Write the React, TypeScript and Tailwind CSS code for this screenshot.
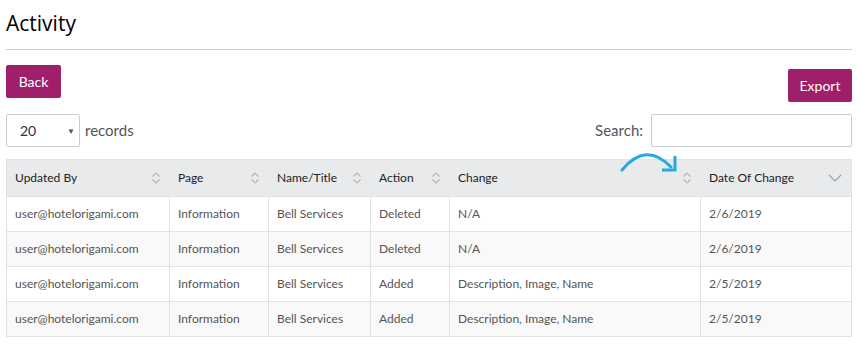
const rows = [
  { by: "user@hotelorigami.com", page: "Information", name: "Bell Services", action: "Deleted", change: "N/A", date: "2/6/2019" },
  { by: "user@hotelorigami.com", page: "Information", name: "Bell Services", action: "Deleted", change: "N/A", date: "2/6/2019" },
  { by: "user@hotelorigami.com", page: "Information", name: "Bell Services", action: "Added", change: "Description, Image, Name", date: "2/5/2019" },
  { by: "user@hotelorigami.com", page: "Information", name: "Bell Services", action: "Added", change: "Description, Image, Name", date: "2/5/2019" },
];

const cols = [
  { label: "Updated By", w: "w-[163px]" },
  { label: "Page", w: "w-[99px]" },
  { label: "Name/Title", w: "w-[102px]" },
  { label: "Action", w: "w-[79px]" },
  { label: "Change", w: "w-[251px]" },
  { label: "Date Of Change", w: "" },
];

function SortIcon() {
  return (
    <svg width="10" height="14" viewBox="0 0 10 14" fill="none" stroke="#b5b5b5" strokeWidth="1.1">
      <path d="M1.5 5.5 L5 2 L8.5 5.5" />
      <path d="M1.5 8.5 L5 12 L8.5 8.5" />
    </svg>
  );
}

function DownIcon() {
  return (
    <svg width="14" height="8" viewBox="0 0 14 8" fill="none" stroke="#8fa3b8" strokeWidth="1.2">
      <path d="M1 1 L7 7 L13 1" />
    </svg>
  );
}

export default function App() {
  return (
    <div className="w-[862px] h-[344px] bg-white px-[6px] pt-[9px] font-['Lato',sans-serif] text-[#333]">
      <h1 className="text-[21px] leading-[28px] font-['Open_Sans',sans-serif] text-black">Activity</h1>
      <div className="mt-[12px] h-px w-[846px] bg-[#cccccc]" />
      <div className="mt-[15px] flex items-start justify-between w-[846px]">
        <button className="h-[33px] w-[55px] rounded-[2px] bg-[#a01f6a] text-[14px] text-white">Back</button>
        <button className="mt-[4px] h-[33px] w-[64px] rounded-[2px] bg-[#a01f6a] text-[14px] text-white">Export</button>
      </div>
      <div className="mt-[12px] flex items-center justify-between w-[846px]">
        <div className="flex items-center gap-[5px]">
          <div className="flex h-[33px] w-[74px] items-center justify-between rounded-[2px] border border-[#cccccc] pl-[13px] pr-[4px] text-[14px] text-[#333]">
            <span>20</span>
            <span className="text-[8px] text-[#555]">▼</span>
          </div>
          <span className="text-[15px] text-[#555]">records</span>
        </div>
        <div className="flex items-center gap-[8px]">
          <span className="text-[15px] text-[#555]">Search:</span>
          <div className="h-[33px] w-[201px] rounded-[2px] border border-[#cccccc]" />
        </div>
      </div>
      <div className="relative mt-[12px] w-[846px] border border-[#e2e2e2] text-[12px]">
        <div className="flex h-[36px] bg-[#e9eaec]">
          {cols.map((c, i) => (
            <div key={c.label} className={`flex items-center justify-between pl-[8px] pr-[9px] ${c.w} ${i === 5 ? "flex-1 pr-[8px]" : ""}`}>
              <span className="text-[#222]">{c.label}</span>
              {i === 5 ? <DownIcon /> : <SortIcon />}
            </div>
          ))}
        </div>
        {rows.map((r, ri) => (
          <div key={ri} className={`flex h-[35px] border-t border-[#e2e2e2] text-[#555] ${ri % 2 === 1 ? "bg-[#f9f9f9]" : "bg-white"}`}>
            {[r.by, r.page, r.name, r.action, r.change, r.date].map((v, i) => (
              <div key={i} className={`flex items-center pl-[8px] ${cols[i].w} ${i === 5 ? "flex-1" : "border-r border-[#e2e2e2]"}`}>
                {v}
              </div>
            ))}
          </div>
        ))}
        <svg className="absolute left-[601px] top-[-7px]" width="72" height="24" viewBox="0 0 72 24" fill="none" stroke="#29a8e0" strokeWidth="3" strokeLinecap="round">
          <path d="M14 17 Q38 -12 63 14" />
          <path d="M67 3 L67 17 L54 17" strokeLinecap="butt" />
        </svg>
      </div>
    </div>
  );
}
